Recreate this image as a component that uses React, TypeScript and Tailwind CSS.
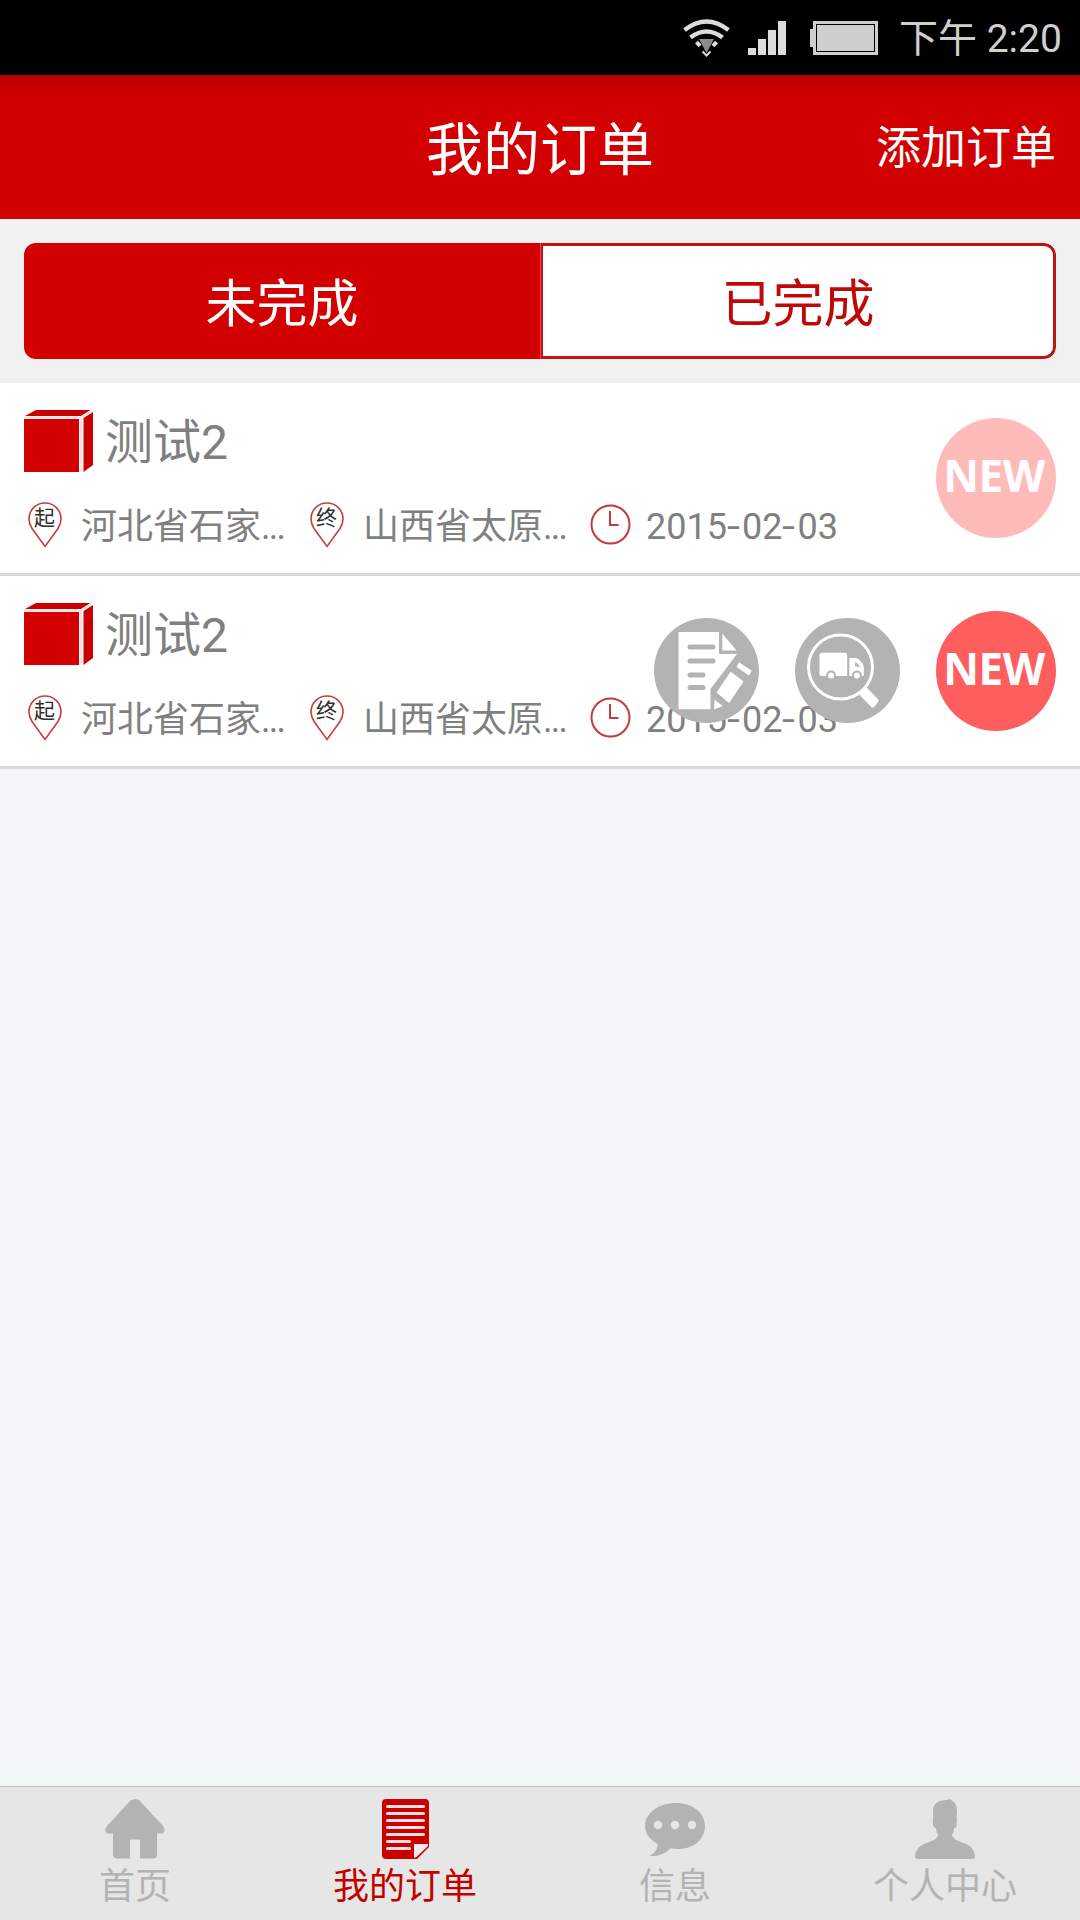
import React from "react";

const FONT = "font-['Roboto','Noto_Sans_CJK_SC',sans-serif]";

function WifiIcon() {
  return (
    <svg width="47" height="38" viewBox="0 0 47 38" fill="none">
      <path d="M1.500 11 Q23.500 -6 45.500 11" stroke="#dcdcdc" strokeWidth="4.200" />
      <path d="M7.500 18.500 Q23.500 6.500 39.500 18.500" stroke="#dcdcdc" strokeWidth="4.600" />
      <path d="M13.500 23 L17 27 M33.500 23 L30 27" stroke="#dcdcdc" strokeWidth="4" />
      <path d="M16 20h15l-7.500 14z" fill="#8c8c8c" />
      <path d="M19.500 32.500l4 4 4-4" stroke="#dcdcdc" strokeWidth="2" />
    </svg>
  );
}

function StatusBar() {
  return (
    <div className="flex h-[75px] items-start bg-black pr-[19px] text-[#cfcfcf]">
      <div className="mt-[19px] ml-auto">
        <WifiIcon />
      </div>
      <div className="mt-[21px] ml-[18px] flex h-[34px] items-end gap-[2px]">
        <div className="h-[7px] w-2 bg-[#dcdcdc]" />
        <div className="h-4 w-2 bg-[#dcdcdc]" />
        <div className="h-[25px] w-2 bg-[#dcdcdc]" />
        <div className="h-[34px] w-2 bg-[#dcdcdc]" />
      </div>
      <div className="mt-[21px] ml-6 flex items-center">
        <div className="h-[18px] w-[3px] bg-[#cfcfcf]" />
        <div className="h-[34px] w-[65px] border-[3px] border-[#cfcfcf] p-px">
          <div className="h-full w-full bg-[#cfcfcf]" />
        </div>
      </div>
      <div className="mt-[9px] ml-[21px] w-[162px] text-[39px] leading-[60px] whitespace-nowrap">下午 2:20</div>
    </div>
  );
}

function BoxIcon() {
  return (
    <svg width="69" height="64" viewBox="0 0 69 64" className="-mt-[2px]">
      <path d="M1 7L12 1h55l-10 6z" fill="#c80000" />
      <path d="M0 10h55v53H0z" fill="#d20000" />
      <path d="M59.500 9L69 3v53l-9.500 7z" fill="#c80000" />
      <path d="M0 8.500h56.500L68 1M57.300 8v55" fill="none" stroke="#ffdede" strokeWidth="2" />
    </svg>
  );
}

function Pin({ label }: { label: string }) {
  return (
    <svg width="34" height="46" viewBox="0 0 34 46">
      <path
        d="M17 1C8 1 1 8 1 17c0 3.500 1.200 6.500 3 9.500L17 44.500l13-18c1.800-3 3-6 3-9.500C33 8 26 1 17 1z"
        fill="#fff"
        stroke="#c83c3c"
        strokeWidth="1.600"
      />
      <text x="16.500" y="23" textAnchor="middle" fontSize="21" fill="#2e2e2e" className={FONT}>
        {label}
      </text>
    </svg>
  );
}

function ClockIcon() {
  return (
    <svg width="41" height="41" viewBox="0 0 41 41" fill="none" stroke="#c33a3a" className="-mt-[2px]">
      <circle cx="20.500" cy="20.500" r="19" strokeWidth="2" />
      <path d="M20 7v14h8.500" strokeWidth="2" />
    </svg>
  );
}

function EditIcon() {
  return (
    <svg width="105" height="105" viewBox="0 0 105 105" className="-mt-px">
      <circle cx="52.500" cy="52.500" r="52.500" fill="#b3b3b3" />
      <path d="M24.500 14H65v22h18L56.500 71v20.300h-32z" fill="#fff" />
      <path d="M68.300 15.500v17H82.500z" fill="#fff" />
      <path d="M36 29h23M36 43h23M36 57h13M36 69.500h13" stroke="#b3b3b3" strokeWidth="5" strokeLinecap="round" />
      <path d="M85 44.300L97.700 52.700 95 57.500 82.500 49z" fill="#fff" />
      <path d="M76.700 53.500L89.600 63.500 75 85 62.500 74.500z" fill="#fff" />
      <path d="M60.500 81.500L68.800 88 60 91.500z" fill="#fff" />
    </svg>
  );
}

function TrackIcon() {
  return (
    <svg width="105" height="105" viewBox="0 0 105 105" className="-mt-px">
      <circle cx="52.500" cy="52.500" r="52.500" fill="#b3b3b3" />
      <circle cx="45.500" cy="49" r="32" fill="none" stroke="#fff" strokeWidth="3" />
      <path d="M71.700 69.500L83.800 82Q82 87 77.300 90L64.500 76.800Q67 71.500 71.700 69.500z" fill="#fff" />
      <path d="M27 34.800h23a2.200 2.200 0 0 1 2.200 2.200V58H26.500a2 2 0 0 1-2-2V37.300a2.500 2.500 0 0 1 2.500-2.500z" fill="#fff" />
      <path d="M54.300 40h6c3.500 0 8.500 6 8.500 9v9H54.300z" fill="#fff" />
      <path d="M60 44.500h1.500l4 5L60 48z" fill="#b3b3b3" />
      <circle cx="36" cy="57.500" r="5" fill="#b3b3b3" />
      <circle cx="62" cy="57.500" r="5" fill="#b3b3b3" />
      <circle cx="36" cy="57.500" r="3" fill="#fff" />
      <circle cx="62" cy="57.500" r="3" fill="#fff" />
    </svg>
  );
}

function NewBadge({ faded }: { faded?: boolean }) {
  return (
    <div
      className={`flex size-[120px] justify-center rounded-full pr-[4px] font-['Open_Sans',sans-serif] text-[44px] leading-[115px] font-bold tracking-[-0.5px] text-white ${
        faded ? "bg-[#ffbaba]" : "bg-[#ff5e5e]"
      }`}
    >
      NEW
    </div>
  );
}

function Place({ label, name }: { label: string; name: string }) {
  return (
    <>
      <Pin label={label} />
      <span className="mt-1 ml-[19px]">
        {name}
        <span className="tracking-[-1.800px]">...</span>
      </span>
    </>
  );
}

function OrderCard({ actions }: { actions?: boolean }) {
  return (
    <div className="relative h-[193px] border-b-[3px] border-[#d9d9d9] bg-white px-6 pt-[27px] text-[#808080]">
      <div className="flex h-16 items-center">
        <BoxIcon />
        <div className="mt-px ml-3 text-[48px] leading-[64px]">测试2</div>
      </div>
      <div className="mt-[27px] flex h-[48px] items-center text-[36px] leading-[48px] whitespace-nowrap">
        <div className="flex w-[282px] items-center pl-1">
          <Place label="起" name="河北省石家" />
        </div>
        <div className="flex w-[284px] items-center pl-1">
          <Place label="终" name="山西省太原" />
        </div>
        <ClockIcon />
        <span className="mt-1 ml-[15px] flex">
          2015<span className="w-[15px] origin-left scale-x-130">-</span>02
          <span className="w-[15px] origin-left scale-x-130">-</span>03
        </span>
      </div>
      <div className="absolute top-0 right-6 flex h-[190px] items-center gap-9">
        {actions && <EditIcon />}
        {actions && <TrackIcon />}
        <NewBadge faded={!actions} />
      </div>
    </div>
  );
}

function HomeIcon() {
  return (
    <svg width="60" height="60" viewBox="0 0 60 60" fill="#b3b3b3">
      <path d="M25.500 1.500Q30-1.500 34.500 1.500L58 27q3 4 0 7.500H52V56q0 3-3.500 3.500H35V40.500H25v19H12Q8.500 59 8 56V34.500H2Q-1.500 31 2 27z" />
    </svg>
  );
}

function OrdersIcon() {
  return (
    <svg width="48" height="60" viewBox="0 0 48 60" className="ml-px">
      <path d="M4 0h39q4 0 4 4v44L35 60H4q-4 0-4-4V4q0-4 4-4z" fill="#c80000" />
      <path
        d="M5.500 7.500h36M5.500 14.500h36M5.500 21.500h36M5.500 28.500h36M5.500 35.500h36M5.500 42.500h22M5.500 49.500h22"
        stroke="#ffe0e0"
        strokeWidth="3"
        strokeLinecap="round"
      />
      <path d="M32 45h14v2L34 58.500h-2z" fill="#f5e8e8" />
    </svg>
  );
}

function MessageIcon() {
  return (
    <svg width="60" height="60" viewBox="0 0 60 60">
      <path
        d="M31 4C48 4 60 14 60 27S49 50 33 50q-4 0-7.500-.8C20 55 13 57.500 4.500 57 10 54 13 50 12.500 45 4 40 0 34 0 27 0 14 14 4 31 4z"
        fill="#b3b3b3"
      />
      <circle cx="13" cy="26" r="4.200" fill="#e6e6e6" />
      <circle cx="30" cy="26" r="4.200" fill="#e6e6e6" />
      <circle cx="47" cy="26" r="4.200" fill="#e6e6e6" />
    </svg>
  );
}

function ProfileIcon() {
  return (
    <svg width="60" height="60" viewBox="0 0 60 60" fill="#b3b3b3">
      <path d="M18 13C18 5 23 1.300 29 1.300Q33 1 35.500 0L37 1.800Q42 4 42 12l-.5 7 .5 1-.5 7.500Q41 29 39 29.300q0 3-.8 5L36.500 36q1.500 3 4.500 5l9.500 3.700Q59 48 60 57q0 3-3 3H3q-3 0-3-3 1-9 9.500-12.300L19 41q3-2 4.500-5l-1.700-2-.8-4.700q-2.500-.5-3-3L17.800 20l.5-1z" />
    </svg>
  );
}

function NavItem({ icon, label, active }: { icon: React.ReactNode; label: string; active?: boolean }) {
  return (
    <div className={`flex flex-1 flex-col items-center pt-3 ${active ? "text-[#c20000]" : "text-[#b3b3b3]"}`}>
      {icon}
      <div className="mt-1 text-[36px] leading-[48px]">{label}</div>
    </div>
  );
}

export default function App() {
  return (
    <div className={`flex h-[1920px] w-[1080px] flex-col overflow-hidden bg-[#f3f7f8] ${FONT}`}>
      <StatusBar />
      <header className="grid h-36 grid-cols-[1fr_auto_1fr] items-center bg-linear-to-b from-[#b40000] via-[#d20000] via-15% to-[#d20000] px-6 text-white">
        <div />
        <h1 className="mt-[7px] text-[57px] leading-[80px]">我的订单</h1>
        <div className="mt-[3px] text-right text-[45px] leading-[60px]">添加订单</div>
      </header>
      <div className="h-[164px] bg-[#f1f1f1] px-6 pt-6">
        <div className="flex h-[116px] overflow-hidden rounded-[12px] text-[51px] leading-[124px]">
          <div className="w-[516px] bg-[#d20000] text-center text-white">未完成</div>
          <div className="w-px bg-[#e64545]" />
          <div className="flex-1 rounded-r-[12px] border-[3px] border-l-2 border-[#c01414] bg-white text-center leading-[118px] text-[#c00808]">
            已完成
          </div>
        </div>
      </div>
      <OrderCard />
      <OrderCard actions />
      <nav className="mt-auto flex h-[134px] border-t border-[#bdbdbd] bg-[#e6e6e6]">
        <NavItem icon={<HomeIcon />} label="首页" />
        <NavItem icon={<OrdersIcon />} label="我的订单" active />
        <NavItem icon={<MessageIcon />} label="信息" />
        <NavItem icon={<ProfileIcon />} label="个人中心" />
      </nav>
    </div>
  );
}
